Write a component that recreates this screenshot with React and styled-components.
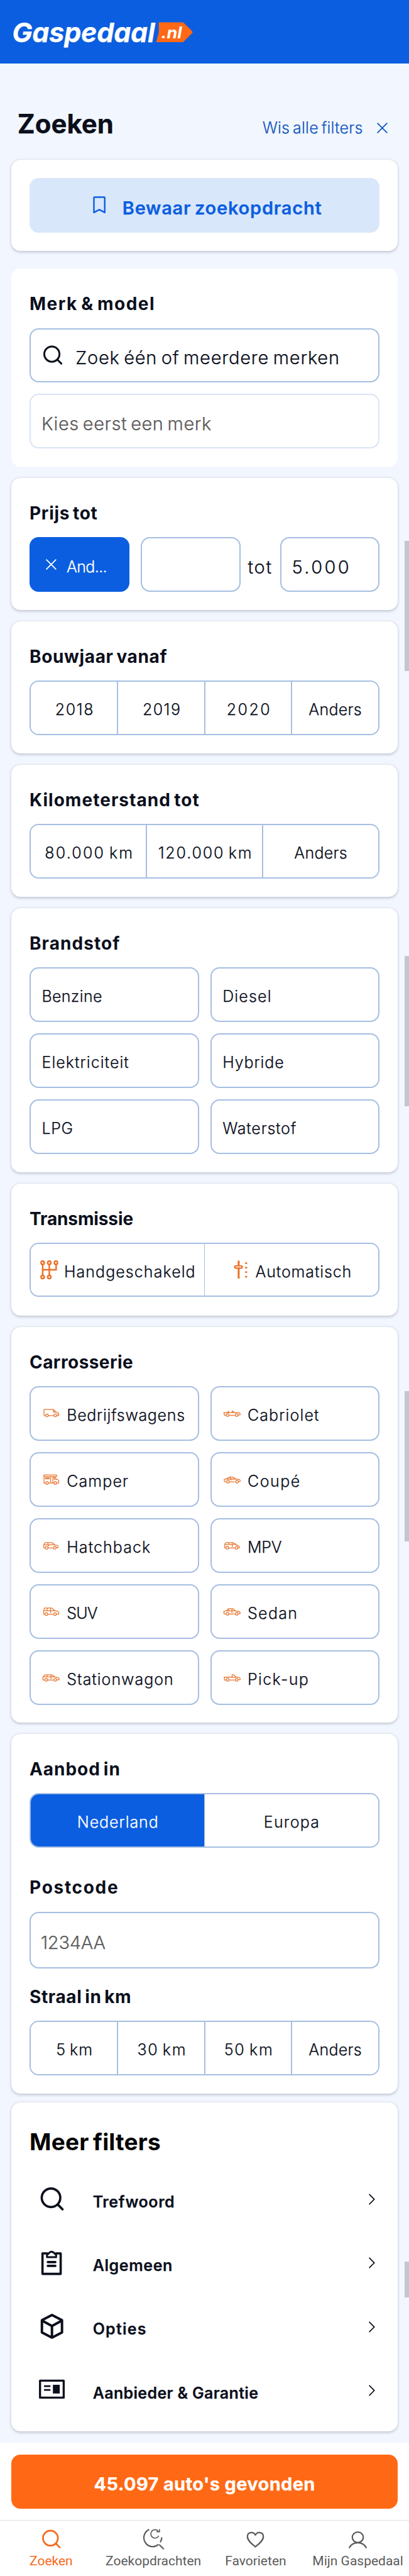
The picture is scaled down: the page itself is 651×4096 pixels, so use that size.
import React from "react";
import styled, { createGlobalStyle, css } from "styled-components";

// Design units (1080 wide artboard) to CSS pixels.
const u = (n) => `${(n * 0.60297).toFixed(2)}px`;

const c = {
  blue: "#0b5ee0",
  link: "#1259bf",
  orange: "#ff6915",
  ink: "#0b0f1c",
  grey: "#5b5b5b",
  line: "#a6bee2",
  lineSoft: "#d8e4f5",
  page: "#f2f6fe",
};

const Global = createGlobalStyle`
  *, *::before, *::after { box-sizing: border-box; }
  body { margin: 0; background: ${c.page}; }
`;

const Page = styled.div`
  position: relative;
  width: 651px;
  height: 4096px;
  overflow: hidden;
  display: flex;
  flex-direction: column;
  background: ${c.page};
  color: ${c.ink};
  font-family: Inter, "Liberation Sans", sans-serif;
  font-weight: 300;
  white-space: nowrap;
  font-size: 25px;
  word-spacing: -2.5px;
  -webkit-text-stroke: 0.25px currentColor;
`;

/* Text run with its own tracking */
const Text = styled.span`
  letter-spacing: ${(p) => p.$ls || 0}px;
  margin-right: ${(p) => -(p.$ls || 0)}px;
`;

const Header = styled.header`
  flex: none;
  display: flex;
  align-items: center;
  height: ${u(168)};
  padding: ${u(1)} 0 0 ${u(32)};
  background: ${c.blue};
  color: #fff;
`;
const Wordmark = styled.div`
  width: ${u(379)};
  font-size: 43px;
  font-weight: 700;
  line-height: ${u(84)};
  letter-spacing: -0.2px;
  font-style: italic;
`;
const TagSvg = styled.svg`
  width: ${u(98)};
  height: ${u(54)};
  overflow: visible;
`;

const TitleRow = styled.div`
  flex: none;
  display: flex;
  align-items: baseline;
  justify-content: space-between;
  height: ${u(253)};
  padding: ${u(117)} ${u(57)} 0 ${u(46)};
`;
const PageTitle = styled.h1`
  margin: 0;
  font-size: 42px;
  font-weight: 700;
  line-height: ${u(84)};
`;
const ClearLink = styled.a`
  display: flex;
  align-items: baseline;
  gap: ${u(37)};
  color: ${c.link};
`;

const Stack = styled.main`
  flex: none;
  display: flex;
  flex-direction: column;
  padding: 0 ${u(30)};
  width: ${u(1080)};
`;
const Card = styled.section`
  flex: none;
  display: flow-root;
  height: ${(p) => u(p.$h)};
  margin-bottom: ${(p) => u(p.$gap ?? 30)};
  padding: 0 ${u(48)};
  border-radius: ${u(24)};
  background: #fff;
  ${(p) => !p.$flat && css`box-shadow: 0 1.5px 4px rgba(30, 42, 62, 0.24), 0 0 1px rgba(30, 42, 62, 0.12);`}
`;
const CardTitle = styled.h2`
  margin: 0;
  height: ${(p) => u(p.$h || 156)};
  padding-top: ${(p) => u(p.$top ?? 48)};
  font-size: 28px;
  font-weight: 700;
  line-height: ${u(92)};
  -webkit-text-stroke: 0;
`;

const SaveButton = styled.div`
  display: flex;
  align-items: center;
  height: ${u(144)};
  margin-top: ${u(48)};
  padding-left: ${u(168)};
  border-radius: ${u(24)};
  background: #d9e7fb;
  color: ${c.blue};
  font-size: 29px;
  font-weight: 600;
  gap: ${u(43)};
  ${Text} { padding-top: ${u(14)}; }
`;

const Input = styled.div`
  display: flex;
  align-items: center;
  gap: ${u(31)};
  width: ${(p) => (p.$w ? u(p.$w) : "auto")};
  height: ${(p) => u(p.$h || 144)};
  margin-bottom: ${(p) => u(p.$mb || 0)};
  padding-left: ${(p) => u(p.$pl || 28)};
  border: 2px solid ${(p) => (p.$soft ? c.lineSoft : c.line)};
  border-radius: ${u(24)};
  color: ${(p) => (p.$muted ? c.grey : c.ink)};
  font-size: 29px;
  ${Text} { padding-top: ${u(12)}; }
`;

const PriceRow = styled.div`
  display: flex;
  align-items: center;
  justify-content: space-between;
  font-size: 29px;
  > ${Text} { padding-top: ${u(12)}; margin: 0 ${u(-11)} 0 ${u(-11)}; }
`;
const ActiveChip = styled.div`
  display: flex;
  align-items: center;
  gap: ${u(27)};
  width: ${u(263)};
  height: ${u(144)};
  padding-left: ${u(43)};
  border-radius: ${u(24)};
  background: ${c.blue};
  color: #fff;
  font-size: 25px;
  ${Text} { padding-top: ${u(12)}; }
`;

const Segments = styled.div`
  display: grid;
  grid-template-columns: repeat(${(p) => p.$n}, 1fr);
  height: ${u(143.5)};
  border: 2px solid ${c.line};
  border-radius: ${u(24)};
  overflow: hidden;
`;
const Segment = styled.div`
  display: flex;
  align-items: center;
  justify-content: center;
  gap: ${u(15)};
  margin-left: -1px;
  border-left: ${(p) => (p.$thin ? 1 : 2)}px solid ${c.line};
  background: ${(p) => (p.$on ? c.blue : "#fff")};
  color: ${(p) => (p.$on ? "#fff" : "inherit")};
  &:first-child { border-left: 0; margin-left: 0; }
  ${Text} { padding-top: ${u(9)}; }
`;

const OptionGrid = styled.div`
  display: grid;
  grid-template-columns: 1fr 1fr;
  gap: ${u(30.2)};
`;
const Option = styled.div`
  display: flex;
  align-items: center;
  gap: ${u(17)};
  height: ${u(144)};
  padding-left: ${(p) => u(p.$icon ? 30 : 29)};
  border: 2px solid ${c.line};
  border-radius: ${u(24)};
  ${Text} { padding-top: ${u(9)}; }
`;

const MoreTitle = styled.h2`
  margin: 0;
  height: ${u(171)};
  padding-top: ${u(48)};
  line-height: ${u(113)};
  font-size: 37px;
  font-weight: 700;
  color: #000;
  -webkit-text-stroke: 0;
`;
const MoreRow = styled.div`
  display: flex;
  align-items: center;
  height: ${u(168)};
  padding: 0 ${u(12)} 0 ${u(24)};
  font-weight: 600;
  word-spacing: 0;
  ${Text} { flex: 1; padding: ${u(12)} 0 0 ${u(71)}; }
`;

const Footer = styled.footer`
  flex: none;
  display: flow-root;
  background: #fff;
  word-spacing: 0;
`;
const ResultButton = styled.div`
  display: flex;
  align-items: center;
  justify-content: center;
  height: ${u(144)};
  margin: ${u(30.5)} ${u(30)} ${u(30)};
  border-radius: ${u(24)};
  background: ${c.orange};
  color: #fff;
  font-size: 29px;
  font-weight: 700;
  ${Text} { padding-top: ${u(12)}; }
`;
const Nav = styled.nav`
  display: grid;
  grid-template-columns: repeat(4, 1fr);
  height: ${u(150)};
  border-top: 1px solid #dcdfe4;
`;
const NavItem = styled.div`
  display: flex;
  flex-direction: column;
  align-items: center;
  gap: ${u(11)};
  padding-top: ${u(19)};
  font-family: Roboto, "Liberation Sans", sans-serif;
  font-size: 21px;
  font-weight: 400;
  line-height: ${u(36)};
  -webkit-text-stroke: 0;
  color: ${(p) => (p.$on ? "#f56a1c" : "#5c5c5c")};
`;

const ScrollThumb = styled.div`
  position: absolute;
  right: 0;
  top: ${(p) => u(p.$y)};
  width: ${u(12)};
  height: ${(p) => u(p.$h)};
  background: #c3c6cf;
`;

const Svg = styled.svg`
  flex: none;
  display: block;
  width: ${(p) => u(p.$w)};
  height: ${(p) => u(p.$h)};
  fill: none;
  stroke: currentColor;
  overflow: visible;
`;

const Cross = ({ size = 28 }) => (
  <Svg $w={size} $h={size} viewBox="0 0 28 28" strokeWidth="3"><path d="M1 1L27 27M27 1L1 27" /></Svg>
);
const SearchIcon = ({ size = 72, sw = 6 }) => (
  <Svg $w={size} $h={size} viewBox="0 0 72 72" strokeWidth={sw} strokeLinecap="round">
    <circle cx="33.5" cy="32.5" r="24.5" /><path d="M51 50L64 63" />
  </Svg>
);
const Bookmark = () => (
  <Svg $w={34} $h={46} viewBox="0 0 34 46" strokeWidth="4" strokeLinejoin="round">
    <path d="M2.500 3.500Q2.500 2.500 4 2.500H29.500Q31 2.500 31 3.500V43L16.800 35.500L2.500 43Z" />
  </Svg>
);
const Chevron = () => (
  <Svg $w={16} $h={30} viewBox="0 0 16 30" strokeWidth="2.800"><path d="M1 1.500L14.500 15L1 28.500" /></Svg>
);

const moreIcons = {
  search: <SearchIcon />,
  clipboard: (
    <Svg $w={72} $h={72} viewBox="0 0 72 72" strokeWidth="6" strokeLinejoin="round" strokeLinecap="round">
      <path d="M23 10H11V64H59V10H47" />
      <path d="M23 20V13Q27 12 28 9Q35 2 42 9Q43 12 47 13V20Z" strokeWidth="5" />
      <path d="M25 33H45M25 43H45" />
    </Svg>
  ),
  box: (
    <Svg $w={72} $h={72} viewBox="0 0 72 72" strokeWidth="6.500" strokeLinejoin="round">
      <path d="M36 5L62.500 18.500V51L36 64.500L9.500 51V18.500ZM9.500 19.500L36 34L62.500 19.500M36 34V64" />
    </Svg>
  ),
  idCard: (
    <Svg $w={72} $h={72} viewBox="0 0 72 72" strokeWidth="5.500" strokeLinejoin="round">
      <rect x="4.500" y="10.500" width="62.500" height="45" />
      <path d="M15 25H32M15 35H32" strokeWidth="4.500" />
      <rect x="38.500" y="21.500" width="18" height="23" fill="currentColor" stroke="none" />
    </Svg>
  ),
};

const GearIcon = styled(Svg)`color: #ec6f25;`;
const Manual = () => (
  <GearIcon $w={48} $h={50} viewBox="0 0 48 50" strokeWidth="4">
    <circle cx="6.500" cy="6.500" r="4.300" /><circle cx="24" cy="6.500" r="4.300" /><circle cx="41.500" cy="6.500" r="4.300" />
    <circle cx="6.500" cy="44" r="4.300" /><circle cx="24" cy="44" r="4.300" />
    <path d="M6.500 11V39.500M24 11V39.500M6.500 25H42V11" />
  </GearIcon>
);
const Automatic = () => (
  <GearIcon $w={48} $h={50} viewBox="0 0 48 50" strokeWidth="4">
    <path d="M18 1V14M18 21V48" strokeWidth="5" />
    <rect x="7.500" y="14.500" width="20" height="6" rx="3" strokeWidth="3.500" />
    <path d="M35 7.500H40.500M35 19.500H40.500M35 31H40.500M35 43H40.500" />
  </GearIcon>
);

/* Side views: outline path plus the two wheel positions */
const cars = {
  van: { d: "M9 23H5V7H30L37 14L42.500 16Q44.500 18 44 23H39M31 23H17M30 7V14H37M41 19H44", w: [13, 35], y: 22.500 },
  camper: { d: "M9 25H5V8M4.500 4H38.500V8H4.500ZM33 8L38 15L43 17Q44.500 20 44 25H39M31 25H17M9 11.500H19V14H9ZM22.500 9V24M28.500 9V24M32 9V15H38", w: [13, 35], y: 25 },
  hatch: { d: "M8 22H4.500L4 15L8 8H26Q30 10 33 14L41 16Q43 18 42 21.500H38M29 22H16M5 14H33M15 8L16 14L18 18", w: [12, 33.500], y: 21.500 },
  suv: { d: "M8 23H4.500L4 14L6.500 6.500H26L34 13.500L42 15.500Q45 18 44 22.500H38M29 23H16M5 13.500H34M13.500 7V14M22.500 7V20", w: [11.500, 34], y: 22.500 },
  wagon: { d: "M6 22H2.500L2 15L7 8.500H26L34 14L43 16Q46 18 45 21.500H39M31 22H15M3 14H34M13 9V14M23.500 9V20", w: [11, 35], y: 21.500 },
  cabrio: { d: "M8 22H4L2 15H42Q46 17 45 21.500H40M31 22H16M10 15L15 12V15M31 15L24 11V15", w: [12, 36], y: 21.500 },
  coupe: { d: "M8 21.500H4L3 15L8 14.500Q15 9 24 9L34 14.500L44 16Q46 18 45 21H40M31 22H16M9 14.500H34M20 9.500L19 14L22 18", w: [13, 37], y: 21.500 },
  mpv: { d: "M7 22H4.500L4.500 13L7 8H26Q32 10 37 15L42 17Q44 19 43 22H40M31 22H15M6 13H35M15 8V13M24.500 8V20", w: [11.500, 35.500], y: 21.500 },
  sedan: { d: "M8 22H3L2 15L9 13.500L14 8H26L33 14L43 16Q46 18 45 21.500H40M31 22H16M9 14H33M23.500 8V20M15 9V14", w: [12, 36], y: 21.500 },
  pickup: { d: "M8 22H4L3 14.500H24V8H28L34 14L44 16Q46 18 45 21.500H40M31 22H16M24 15H34", w: [12, 36], y: 21.500 },
};
const CarIcon = styled(Svg)`color: #e8752f;`;
const Car = ({ kind }) => {
  const k = cars[kind];
  return (
    <CarIcon $w={48} $h={32} viewBox="0 0 48 32" strokeWidth="2.100" strokeLinejoin="round">
      <path d={k.d} />
      {k.w.map((x) => <circle key={x} cx={x} cy={k.y} r="3.600" />)}
    </CarIcon>
  );
};

const navIcons = {
  search: <SearchIcon size={58} sw={5.5} />,
  saved: (
    <Svg $w={58} $h={58} viewBox="0 0 58 58" strokeWidth="3.600">
      <path d="M17.500 3.500A23.500 23.500 0 1 0 42 43M50.500 24A23 23 0 0 1 46.500 37M43.500 43L56 55" />
      <path d="M42.500 20A11 11 0 1 1 41.500 8.500M44.500 2.500V9.500H36.500" strokeWidth="2.800" />
    </Svg>
  ),
  heart: (
    <Svg $w={58} $h={58} viewBox="0 0 58 58" strokeWidth="3.800" strokeLinejoin="round">
      <path d="M29 49C20 42 8 33 8 22C8 10 23 8 29 18C35 8 50 10 50 22C50 33 38 42 29 49Z" />
    </Svg>
  ),
  person: (
    <Svg $w={58} $h={58} viewBox="0 0 58 58" strokeWidth="3.800" strokeLinecap="round">
      <ellipse cx="29" cy="24" rx="14.500" ry="14" /><path d="M7 51Q14 38.500 29 38.500T51 51" />
    </Svg>
  ),
};

const SegmentRow = ({ items }) => (
  <Segments $n={items.length}>
    {items.map(([t, ls]) => <Segment key={t}><Text $ls={ls}>{t}</Text></Segment>)}
  </Segments>
);

const fuels = [["Benzine", 0.31], ["Diesel", 1.16], ["Elektriciteit", 1.04], ["Hybride", 0.87], ["LPG", 0.6], ["Waterstof", 0.77]];
const bodies = [
  ["Bedrijfswagens", 0.68, "van"], ["Cabriolet", 1.1, "cabrio"],
  ["Camper", 1.08, "camper"], ["Coupé", 1.5, "coupe"],
  ["Hatchback", 1.08, "hatch"], ["MPV", -0.25, "mpv"],
  ["SUV", -0.8, "suv"], ["Sedan", 1.33, "sedan"],
  ["Stationwagon", 0.98, "wagon"], ["Pick-up", 1.36, "pickup"],
];
const more = [["Trefwoord", 0.57, "search"], ["Algemeen", 0.6, "clipboard"], ["Opties", 1.21, "box"], ["Aanbieder & Garantie", 0.34, "idCard"]];
const nav = [["Zoeken", "search"], ["Zoekopdrachten", "saved"], ["Favorieten", "heart"], ["Mijn Gaspedaal", "person"]];
const thumbs = [[1427, 343], [2521, 397], [3668, 397], [5964, 94]];

export default function App() {
  return (
    <Page>
      <Global />
      <Header>
        <Wordmark>Gaspedaal</Wordmark>
        <TagSvg viewBox="0 0 98 54">
          <path d="M8 1H72Q97 24 97 27Q97 30 72 53H1L8 27Z" fill={c.orange} />
          <text x="14" y="43.500" fill="#fff" fontSize="43" fontWeight="700" fontStyle="italic" textLength="55" lengthAdjust="spacingAndGlyphs">.nl</text>
        </TagSvg>
      </Header>

      <TitleRow>
        <PageTitle><Text $ls={0}>Zoeken</Text></PageTitle>
        <ClearLink><Text $ls={0.24}>Wis alle filters</Text><Cross /></ClearLink>
      </TitleRow>

      <Stack>
        <Card $h={240} $gap={48}>
          <SaveButton><Bookmark /><Text $ls={0.78}>Bewaar zoekopdracht</Text></SaveButton>
        </Card>

        <Card $h={522} $flat>
          <CardTitle><Text $ls={1.45}>Merk & model</Text></CardTitle>
          <Input $mb={30}><SearchIcon size={59} /><Text $ls={0.8}>Zoek één of meerdere merken</Text></Input>
          <Input $soft $muted><Text $ls={0.51}>Kies eerst een merk</Text></Input>
        </Card>

        <Card $h={348}>
          <CardTitle><Text $ls={0.7}>Prijs tot</Text></CardTitle>
          <PriceRow>
            <ActiveChip><Cross /><Text $ls={-0.64}>And...</Text></ActiveChip>
            <Input $w={263} />
            <Text $ls={1.6}>tot</Text>
            <Input $w={263}><Text $ls={3.4}>5.000</Text></Input>
          </PriceRow>
        </Card>

        <Card $h={348}>
          <CardTitle><Text $ls={0.65}>Bouwjaar vanaf</Text></CardTitle>
          <SegmentRow items={[["2018", 1.69], ["2019", 1.46], ["2020", 2.49], ["Anders", 0.29]]} />
        </Card>

        <Card $h={348}>
          <CardTitle><Text $ls={1.04}>Kilometerstand tot</Text></CardTitle>
          <SegmentRow items={[["80.000 km", 2.18], ["120.000 km", 1.84], ["Anders", 0.29]]} />
        </Card>

        <Card $h={696}>
          <CardTitle><Text $ls={1.05}>Brandstof</Text></CardTitle>
          <OptionGrid>
            {fuels.map(([t, ls]) => <Option key={t}><Text $ls={ls}>{t}</Text></Option>)}
          </OptionGrid>
        </Card>

        <Card $h={348}>
          <CardTitle><Text $ls={-0.12}>Transmissie</Text></CardTitle>
          <Segments $n={2}>
            <Segment><Manual /><Text $ls={1.06}>Handgeschakeld</Text></Segment>
            <Segment $thin><Automatic /><Text $ls={0.87}>Automatisch</Text></Segment>
          </Segments>
        </Card>

        <Card $h={1044}>
          <CardTitle><Text $ls={0.43}>Carrosserie</Text></CardTitle>
          <OptionGrid>
            {bodies.map(([t, ls, kind]) => <Option key={t} $icon><Car kind={kind} /><Text $ls={ls}>{t}</Text></Option>)}
          </OptionGrid>
        </Card>

        <Card $h={948} $gap={24}>
          <CardTitle><Text $ls={0.95}>Aanbod in</Text></CardTitle>
          <Segments $n={2}>
            <Segment $on><Text $ls={0.93}>Nederland</Text></Segment>
            <Segment $thin><Text $ls={1.2}>Europa</Text></Segment>
          </Segments>
          <CardTitle $h={169} $top={60}><Text $ls={1.7}>Postcode</Text></CardTitle>
          <Input $muted $h={149} $pl={26}><Text $ls={-0.26}>1234AA</Text></Input>
          <CardTitle $h={138.5} $top={30}><Text $ls={0.62}>Straal in km</Text></CardTitle>
          <SegmentRow items={[["5 km", 1.2], ["30 km", 1.74], ["50 km", 1.82], ["Anders", 0.29]]} />
        </Card>

        <Card $h={867}>
          <MoreTitle><Text $ls={0.2}>Meer filters</Text></MoreTitle>
          {more.map(([t, ls, icon]) => (
            <MoreRow key={t}>{moreIcons[icon]}<Text $ls={ls}>{t}</Text><Chevron /></MoreRow>
          ))}
        </Card>
      </Stack>

      <Footer>
        <ResultButton><Text $ls={0.35}>45.097 auto's gevonden</Text></ResultButton>
        <Nav>
          {nav.map(([t, icon], i) => <NavItem key={t} $on={i === 0}>{navIcons[icon]}<span>{t}</span></NavItem>)}
        </Nav>
      </Footer>

      {thumbs.map(([y, h]) => <ScrollThumb key={y} $y={y} $h={h} />)}
    </Page>
  );
}
